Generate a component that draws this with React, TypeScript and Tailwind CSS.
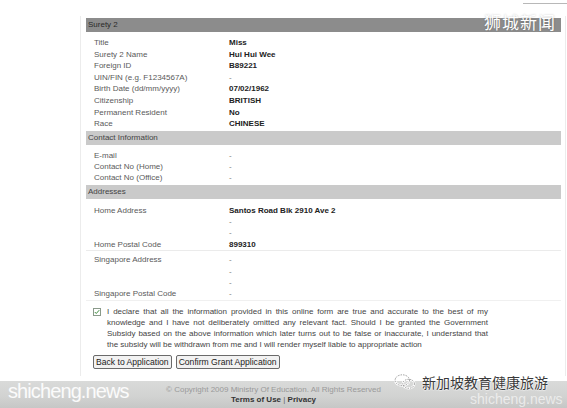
import React from 'react';

type Row = { label: string; value: string };

const surety: Row[] = [
  { label: 'Title', value: 'Miss' },
  { label: 'Surety 2 Name', value: 'Hui Hui Wee' },
  { label: 'Foreign ID', value: 'B89221' },
  { label: 'UIN/FIN (e.g. F1234567A)', value: '-' },
  { label: 'Birth Date (dd/mm/yyyy)', value: '07/02/1962' },
  { label: 'Citizenship', value: 'BRITISH' },
  { label: 'Permanent Resident', value: 'No' },
  { label: 'Race', value: 'CHINESE' },
];

const contact: Row[] = [
  { label: 'E-mail', value: '-' },
  { label: 'Contact No (Home)', value: '-' },
  { label: 'Contact No (Office)', value: '-' },
];

const homeAddr: Row[] = [
  { label: 'Home Address', value: 'Santos Road Blk 2910 Ave 2' },
  { label: '', value: '-' },
  { label: '', value: '-' },
  { label: 'Home Postal Code', value: '899310' },
];

const sgAddr: Row[] = [
  { label: 'Singapore Address', value: '-' },
  { label: '', value: '-' },
  { label: '', value: '-' },
  { label: 'Singapore Postal Code', value: '-' },
];

function Rows({ rows, h, bold = true }: { rows: Row[]; h: string; bold?: boolean }) {
  return (
    <div className="pl-[8px]">
      {rows.map((r, i) => (
        <div key={i} className={`grid grid-cols-[135px_1fr] ${h}`}>
          <span className="text-[#5a5a5a]">{r.label}</span>
          <span className={r.value === '-' ? 'text-[#777]' : bold ? 'font-bold text-[#222]' : 'text-[#222]'}>{r.value}</span>
        </div>
      ))}
    </div>
  );
}

function Bar({ title, dark }: { title: string; dark?: boolean }) {
  return (
    <div
      className={`flex h-[14px] items-center pl-[2px] ${dark ? 'bg-[#8c8c8c] text-[#2a2a2a]' : 'bg-[#cacaca] text-[#444]'}`}
    >
      {title}
    </div>
  );
}

const declaration = [
  'I declare that all the information provided in this online form are true and accurate to the best of my',
  'knowledge and I have not deliberately omitted any relevant fact. Should I be granted the Government',
  'Subsidy based on the above information which later turns out to be false or inaccurate, I understand that',
  'the subsidy will be withdrawn from me and I will render myself liable to appropriate action',
];

export default function App() {
  return (
    <div className="relative h-[408px] w-[567px] overflow-hidden bg-white font-['Liberation_Sans',Arial,sans-serif] text-[8px]">
      {/* cut-off input edge top right */}
      <div className="absolute left-[523px] top-[3px] h-px w-[44px] bg-[#b8b8b8]" />

      <div className="ml-[80px] mt-[16px] w-[486px] border-l border-r border-[#ececec] pl-[5px] pr-[4px] pt-[2px] pb-[7px] leading-[11.4px]">
        <Bar title="Surety 2" dark />
        <div className="pt-[5px] leading-[11.6px]">
          <Rows rows={surety} h="h-[11.6px]" />
        </div>
        <div className="mt-[1px]">
          <Bar title="Contact Information" />
        </div>
        <div className="pt-[5px] leading-[11.3px]">
          <Rows rows={contact} h="h-[11.3px]" bold={false} />
        </div>
        <div className="mt-[1px]">
          <Bar title="Addresses" />
        </div>
        <div className="border-b border-[#ebebeb] pt-[6px] leading-[11.4px]">
          <Rows rows={homeAddr} h="h-[11.4px]" />
        </div>
        <div className="border-b border-[#f0f0f0] pt-[3px] leading-[11.4px]">
          <Rows rows={sgAddr} h="h-[11.4px]" />
        </div>

        <div className="flex pt-[5px] pl-[7px] leading-[11px]">
          <div className="mr-[6px] mt-[2px] flex h-[8px] w-[8px] shrink-0 items-center justify-center border border-[#8a9a8a] bg-white">
            <svg viewBox="0 0 8 8" className="h-[6px] w-[6px]">
              <path d="M1 4 L3 6 L7 1.5" fill="none" stroke="#3a8a3a" strokeWidth="1.3" />
            </svg>
          </div>
          <div className="w-[381px] text-[#444]">
            {declaration.map((l, i) => (
              <div key={i} className={i < 3 ? 'text-justify [text-align-last:justify]' : ''}>
                {l}
              </div>
            ))}
          </div>
        </div>

        <div className="mt-[5px] flex gap-[4px] pl-[7px]">
          <button className="h-[14px] rounded-[2px] border border-[#6a6a6a] bg-[#f2f2f2] px-[2px] text-[8.6px] leading-[12px] text-[#222]">
            Back to Application
          </button>
          <button className="h-[14px] rounded-[2px] border border-[#6a6a6a] bg-[#f2f2f2] px-[2px] text-[8.6px] leading-[12px] text-[#222]">
            Confirm Grant Application
          </button>
        </div>
      </div>

      {/* footer band */}
      <div className="mt-[5px] flex h-[30px] flex-col items-center bg-gradient-to-b from-[#d9dad9] via-[#d2d3d2] to-[#c3c4c3] pr-[20px] pt-[4px]">
        <div className="text-[8px] leading-[10px] text-[#9a9a9a]">
          © Copyright 2009 Ministry Of Education. All Rights Reserved
        </div>
        <div className="text-[8px] font-bold leading-[10px] text-[#333]">
          Terms of Use <span className="font-normal text-[#666]">|</span> Privacy
        </div>
      </div>

      {/* watermarks */}
      <div className="absolute left-[484px] top-[12px] font-['Noto_Sans_CJK_SC',sans-serif] text-[17px] leading-[20px] tracking-[1px] text-white [text-shadow:0_0_2px_rgba(0,0,0,0.25)]">
        狮城新闻
      </div>
      <div className="absolute left-[8px] top-[379px] font-['Liberation_Sans',Arial,sans-serif] text-[20px] leading-[24px] tracking-[-0.9px] text-white/90">
        shicheng.news
      </div>
      <div className="absolute left-[393px] top-[373px] flex items-center gap-[5px]">
        <svg viewBox="0 0 26 20" className="h-[18px] w-[24px]">
          <g fill="none" stroke="#ffffff" strokeWidth="2.4">
            <ellipse cx="10" cy="8" rx="8" ry="6" />
            <ellipse cx="17" cy="12" rx="6.5" ry="5" />
          </g>
          <g fill="none" stroke="#777" strokeWidth="0.8" strokeDasharray="1.6 1.2">
            <ellipse cx="10" cy="8" rx="8" ry="6" />
            <ellipse cx="17" cy="12" rx="6.5" ry="5" />
          </g>
        </svg>
        <div className="font-['Noto_Sans_CJK_SC',sans-serif] text-[14px] leading-[18px] text-[#3a3a3a] [text-shadow:0_0_2px_#fff,0_0_2px_#fff,0_0_1px_#fff]">
          新加坡教育健康旅游
        </div>
      </div>
      <div className="absolute left-[470px] top-[391px] font-['Liberation_Sans',Arial,sans-serif] text-[14px] leading-[16px] text-white/60">
        shicheng.news
      </div>
    </div>
  );
}
